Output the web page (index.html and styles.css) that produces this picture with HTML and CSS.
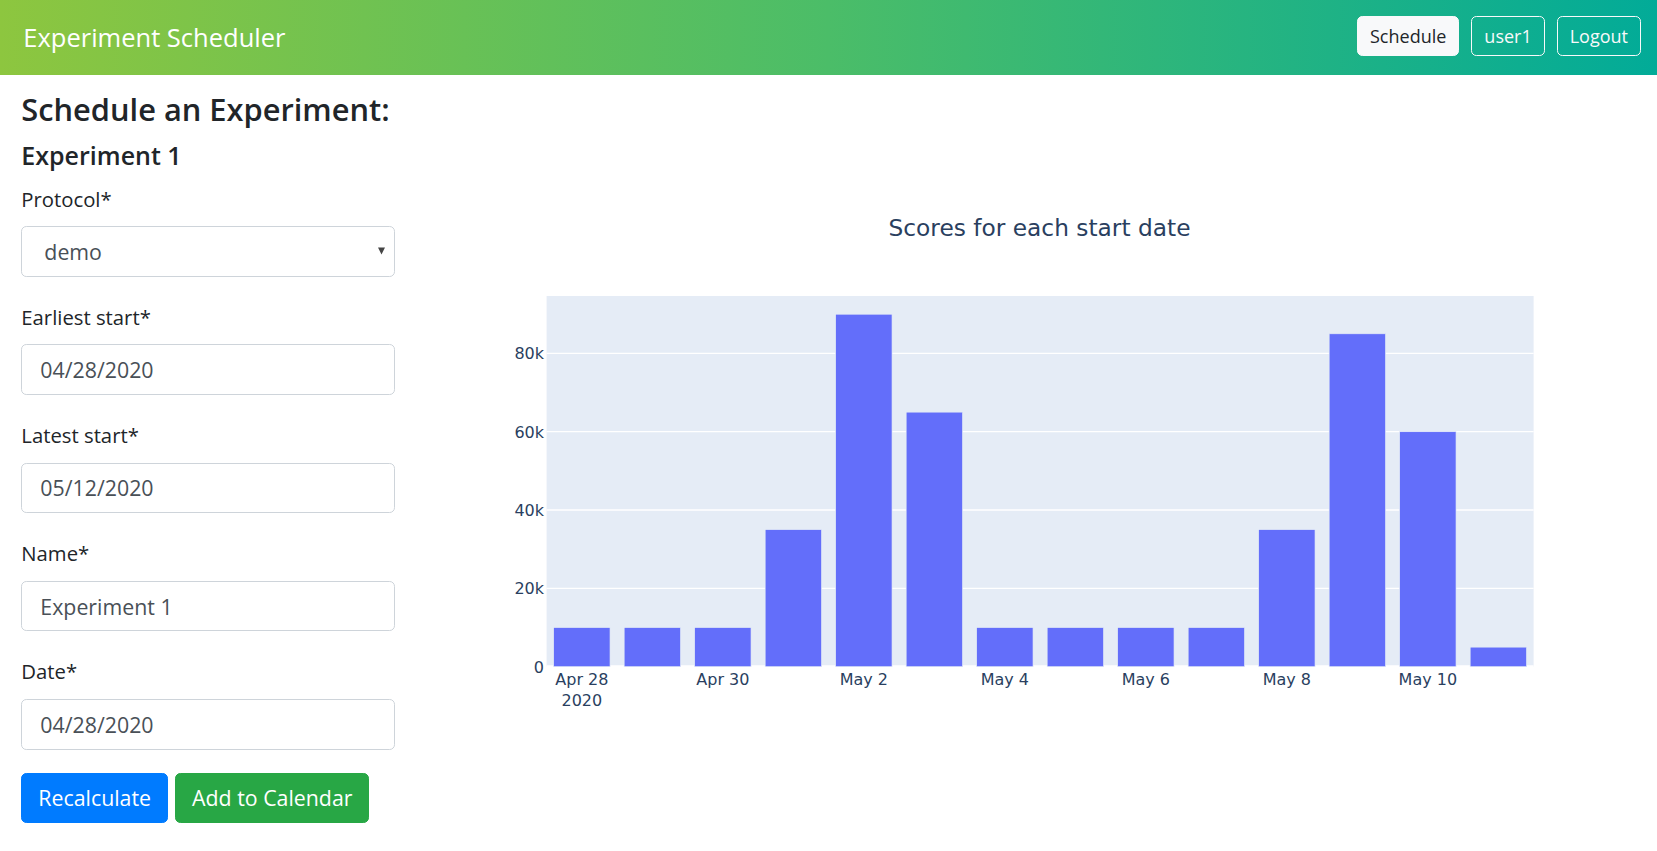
FILE: index.html
```html
<!DOCTYPE html>
<html lang="en">
<head>
<meta charset="utf-8">
<title>Experiment Scheduler</title>
<link rel="stylesheet" href="styles.css">
</head>
<body>
<nav class="navbar">
  <a class="brand" href="#">Experiment Scheduler</a>
  <div class="nav-actions">
    <a class="btn btn-sm btn-light" href="#">Schedule</a>
    <a class="btn btn-sm btn-outline" href="#">user1</a>
    <a class="btn btn-sm btn-outline" href="#">Logout</a>
  </div>
</nav>
<main class="container">
  <section class="col-form">
    <h4 class="page-title">Schedule an Experiment:</h4>
    <h5 class="sub-title">Experiment 1</h5>
    <form class="form">
      <div class="form-group">
        <label class="label" for="protocol">Protocol*</label>
        <div class="select-wrap">
          <select class="control select" id="protocol"><option>demo</option></select>
          <svg class="caret" width="7" height="8" viewBox="0 0 7 8"><polygon points="0,0.5 7,0.5 3.5,7.5" fill="#454545"/></svg>
        </div>
      </div>
      <div class="form-group">
        <label class="label" for="earliest">Earliest start*</label>
        <input class="control" id="earliest" type="text" value="04/28/2020">
      </div>
      <div class="form-group">
        <label class="label" for="latest">Latest start*</label>
        <input class="control" id="latest" type="text" value="05/12/2020">
      </div>
      <div class="form-group">
        <label class="label" for="name">Name*</label>
        <input class="control" id="name" type="text" value="Experiment 1">
      </div>
      <div class="form-group">
        <label class="label" for="date">Date*</label>
        <input class="control" id="date" type="text" value="04/28/2020">
      </div>
      <div class="actions">
        <button class="btn btn-primary" type="button">Recalculate</button>
        <button class="btn btn-success" type="button">Add to Calendar</button>
      </div>
    </form>
  </section>
  <section class="col-chart">
    <svg class="chart" width="1202" height="640" viewBox="0 0 1202 640">
      <text class="chart-title" x="604.5" y="146" text-anchor="middle">Scores for each start date</text>
      <rect x="111.6" y="206" width="987" height="370.7" fill="#E5ECF6"/>
      <g stroke="#ffffff" stroke-width="1.33">
        <line x1="111.6" x2="1098.6" y1="498.4" y2="498.4"/>
        <line x1="111.6" x2="1098.6" y1="420" y2="420"/>
        <line x1="111.6" x2="1098.6" y1="341.7" y2="341.7"/>
        <line x1="111.6" x2="1098.6" y1="263.4" y2="263.4"/>
      </g>
      <line x1="111.6" x2="1098.6" y1="576.7" y2="576.7" stroke="#ffffff" stroke-width="2.67"/>
      <g fill="#636efa" stroke="#E5ECF6" stroke-width="0.67">
        <rect x="118.65" y="537.53" width="56.4" height="39.17"/>
        <rect x="189.15" y="537.53" width="56.4" height="39.17"/>
        <rect x="259.65" y="537.53" width="56.4" height="39.17"/>
        <rect x="330.15" y="439.62" width="56.4" height="137.08"/>
        <rect x="400.65" y="224.2" width="56.4" height="352.5"/>
        <rect x="471.15" y="322.12" width="56.4" height="254.58"/>
        <rect x="541.65" y="537.53" width="56.4" height="39.17"/>
        <rect x="612.15" y="537.53" width="56.4" height="39.17"/>
        <rect x="682.65" y="537.53" width="56.4" height="39.17"/>
        <rect x="753.15" y="537.53" width="56.4" height="39.17"/>
        <rect x="823.65" y="439.62" width="56.4" height="137.08"/>
        <rect x="894.15" y="243.78" width="56.4" height="332.92"/>
        <rect x="964.65" y="341.7" width="56.4" height="235"/>
        <rect x="1035.15" y="557.12" width="56.4" height="19.58"/>
      </g>
      <g class="tick" text-anchor="end">
        <text x="109" y="582.7">0</text>
        <text x="109" y="504.4">20k</text>
        <text x="109" y="426">40k</text>
        <text x="109" y="347.7">60k</text>
        <text x="109" y="269.4">80k</text>
      </g>
      <g class="tick" text-anchor="middle">
        <text x="146.85" y="595">Apr 28</text>
        <text x="146.85" y="615.7">2020</text>
        <text x="287.85" y="595">Apr 30</text>
        <text x="428.85" y="595">May 2</text>
        <text x="569.85" y="595">May 4</text>
        <text x="710.85" y="595">May 6</text>
        <text x="851.85" y="595">May 8</text>
        <text x="992.85" y="595">May 10</text>
      </g>
    </svg>
  </section>
</main>
</body>
</html>
```

FILE: styles.css
```css
* {
  box-sizing: border-box;
}

body {
  margin: 0;
  font-family: "Open Sans", "Noto Sans", sans-serif;
  color: #212529;
  background: #ffffff;
}

.navbar {
  height: 74.67px;
  display: flex;
  align-items: center;
  justify-content: space-between;
  padding: 0 16px 0 23.3px;
  background: linear-gradient(90deg, #8dc63f 0%, #4bbd68 50%, #02ab98 100%);
}

.brand {
  font-size: 25.5px;
  line-height: 40px;
  color: #ffffff;
  text-decoration: none;
}

.nav-actions {
  display: flex;
  gap: 12px;
  margin-bottom: 3px;
}

.btn {
  display: inline-block;
  font-family: inherit;
  font-size: 21.33px;
  line-height: 32px;
  padding: 8px 16px;
  border: 1.33px solid transparent;
  border-radius: 5.33px;
  color: #ffffff;
  text-decoration: none;
  cursor: pointer;
}

.btn-sm {
  font-size: 18px;
  line-height: 28px;
  padding: 5px 12px;
}

.btn-light {
  background: #f8f9fa;
  border-color: #f8f9fa;
  color: #212529;
}

.btn-outline {
  background: transparent;
  border-color: #f8f9fa;
  color: #f8f9fa;
}

.btn-primary {
  background: #007bff;
  border-color: #007bff;
}

.btn-success {
  background: #28a745;
  border-color: #28a745;
}

.container {
  display: flex;
  padding: 15px 20px 0 21.33px;
}

.col-form {
  width: 373.33px;
  flex: none;
}

.col-chart {
  flex: 1;
  margin-left: 40px;
}

.page-title {
  margin: 0 0 10.67px;
  font-size: 30.8px;
  line-height: 38.4px;
  font-weight: 600;
  white-space: nowrap;
}

.sub-title {
  margin: 0 0 12px;
  font-size: 25px;
  line-height: 32px;
  font-weight: 600;
}

.form {
  margin: 0;
}

.form-group {
  margin-bottom: 23.9px;
}

.label {
  display: block;
  font-size: 20.3px;
  line-height: 32px;
  margin-bottom: 11.6px;
}

.select-wrap {
  position: relative;
}

.control {
  display: block;
  width: 100%;
  height: 50.67px;
  padding: 8px 16px 8px 18px;
  font-family: inherit;
  font-size: 21.33px;
  line-height: 32px;
  color: #495057;
  background: #ffffff;
  border: 1.33px solid #ced4da;
  border-radius: 5.33px;
  outline: none;
}

.select {
  appearance: none;
  -webkit-appearance: none;
  padding-left: 22px;
}

.caret {
  position: absolute;
  right: 9.5px;
  top: 21px;
}

.actions {
  display: flex;
  gap: 7px;
}

.chart {
  display: block;
}

.chart text {
  font-family: "DejaVu Sans", Verdana, sans-serif;
  fill: #2a3f5f;
}

.chart-title {
  font-size: 23.3px;
}

.tick {
  font-size: 16px;
}
```
